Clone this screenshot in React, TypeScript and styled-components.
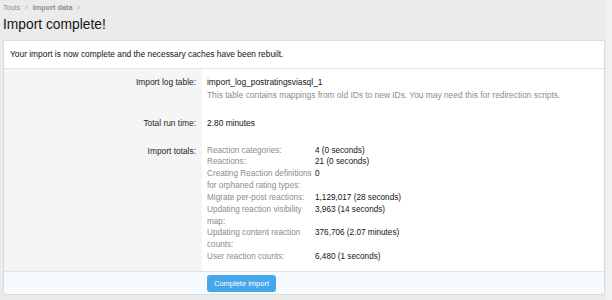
import React from 'react';
import styled, { createGlobalStyle } from 'styled-components';

const GlobalStyle = createGlobalStyle`
  html, body {
    margin: 0;
    padding: 0;
    background: #ebebeb;
    font-family: "Liberation Sans", Arial, sans-serif;
    color: #141414;
  }
`;

const totals = [
  { label: 'Reaction categories:', value: '4 (0 seconds)' },
  { label: 'Reactions:', value: '21 (0 seconds)' },
  { label: 'Creating Reaction definitions for orphaned rating types:', value: '0' },
  { label: 'Migrate per-post reactions:', value: '1,129,017 (28 seconds)' },
  { label: 'Updating reaction visibility map:', value: '3,963 (14 seconds)' },
  { label: 'Updating content reaction counts:', value: '376,706 (2.07 minutes)' },
  { label: 'User reaction counts:', value: '6,480 (1 seconds)' },
];

const App = () => {
  return (
    <>
      <GlobalStyle />
      <Layout>
        <Main>
          <Breadcrumb>
            <Crumb>Tools</Crumb>
            <Sep>›</Sep>
            <Crumb $current>Import data</Crumb>
            <Sep>›</Sep>
          </Breadcrumb>
          <Title>Import complete!</Title>
          <Panel>
            <Message>Your import is now complete and the necessary caches have been rebuilt.</Message>
            <Row>
              <Label>Import log table:</Label>
              <Value>
                import_log_postratingsviasql_1
                <Hint>This table contains mappings from old IDs to new IDs. You may need this for redirection scripts.</Hint>
              </Value>
            </Row>
            <Row>
              <Label>Total run time:</Label>
              <Value>2.80 minutes</Value>
            </Row>
            <Row>
              <Label>Import totals:</Label>
              <Value>
                <Totals>
                  {totals.map((t) => (
                    <React.Fragment key={t.label}>
                      <TotalLabel>{t.label}</TotalLabel>
                      <TotalValue>{t.value}</TotalValue>
                    </React.Fragment>
                  ))}
                </Totals>
              </Value>
            </Row>
            <Footer>
              <FooterSpacer />
              <FooterActions>
                <Button type="button">Complete import</Button>
              </FooterActions>
            </Footer>
          </Panel>
        </Main>
        <Rail />
      </Layout>
    </>
  );
};

const Layout = styled.div`
  display: flex;
  min-height: 300px;
`;
const Main = styled.div`
  flex: 1;
  padding: 0 1px 0 3px;
`;
const Rail = styled.div`
  width: 6px;
  background: #f1f1f1;
`;
const Breadcrumb = styled.div`
  display: flex;
  align-items: center;
  gap: 5px;
  height: 14px;
  font-size: 7.3px;
  color: #8e8e8e;
`;
const Crumb = styled.span<{ $current?: boolean }>`
  font-weight: ${(p) => (p.$current ? 700 : 400)};
`;
const Sep = styled.span`
  font-size: 8px;
  color: #aaaaaa;
`;
const Title = styled.h1`
  margin: 0;
  height: 26px;
  font-size: 13.8px;
  font-weight: 400;
  line-height: 22px;
  color: #141414;
`;
const Panel = styled.div`
  background: #ffffff;
  border: 1px solid #dcdcdc;
  border-radius: 2px;
  font-size: 8.4px;
  line-height: 12.5px;
`;
const Message = styled.div`
  padding: 7px 6px 8px;
  line-height: 12px;
  border-bottom: 1px solid #e3e3e3;
`;
const Row = styled.div`
  display: grid;
  grid-template-columns: 198px 1fr;
`;
const Label = styled.div`
  background: #f5f5f5;
  text-align: right;
  padding: 7px 6px 8.5px 0;
  color: #262626;
`;
const Value = styled.div`
  padding: 7px 6px 8.5px 5px;
`;
const Hint = styled.div`
  color: #8c8c8c;
`;
const Totals = styled.div`
  display: grid;
  grid-template-columns: 108px auto;
  justify-content: start;
  font-size: 8.2px;
  line-height: 11.85px;
`;
const TotalLabel = styled.div`
  color: #8c8c8c;
  padding-right: 1px;
`;
const TotalValue = styled.div`
  color: #141414;
`;
const Footer = styled.div`
  display: grid;
  grid-template-columns: 198px 1fr;
  background: #f4fafd;
  border-top: 1px solid #dde5ea;
`;
const FooterSpacer = styled.div``;
const FooterActions = styled.div`
  padding: 3px 5px 2px;
  line-height: 0;
`;
const Button = styled.button`
  all: unset;
  display: inline-flex;
  align-items: center;
  justify-content: center;
  height: 17px;
  padding: 0 7px;
  background: #47a7eb;
  border-radius: 3px;
  color: #ffffff;
  font-family: "Liberation Sans", Arial, sans-serif;
  font-size: 7.5px;
  line-height: 17px;
  cursor: pointer;
`;

export default App;
